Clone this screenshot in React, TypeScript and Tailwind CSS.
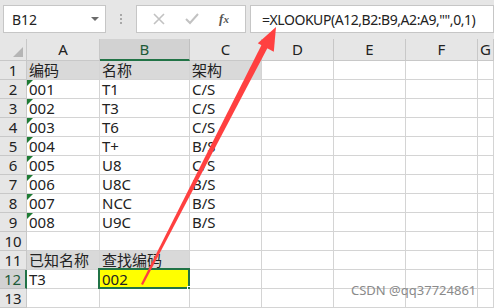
import React from 'react';

const cols = ['A', 'B', 'C', 'D', 'E', 'F', 'G'];

type Cell = { text?: string; gray?: boolean; tri?: boolean };

const rows: Cell[][] = [
  [{ text: '编码', gray: true }, { text: '名称', gray: true }, { text: '架构', gray: true }],
  [{ text: '001', tri: true }, { text: 'T1' }, { text: 'C/S' }],
  [{ text: '002', tri: true }, { text: 'T3' }, { text: 'C/S' }],
  [{ text: '003', tri: true }, { text: 'T6' }, { text: 'C/S' }],
  [{ text: '004', tri: true }, { text: 'T+' }, { text: 'B/S' }],
  [{ text: '005', tri: true }, { text: 'U8' }, { text: 'C/S' }],
  [{ text: '006', tri: true }, { text: 'U8C' }, { text: 'B/S' }],
  [{ text: '007', tri: true }, { text: 'NCC' }, { text: 'B/S' }],
  [{ text: '008', tri: true }, { text: 'U9C' }, { text: 'B/S' }],
  [],
  [{ text: '已知名称', gray: true }, { text: '查找编码', gray: true }],
  [{ text: 'T3' }, { text: '002' }],
  [],
];

const font = { fontFamily: '"Noto Sans", "Noto Sans CJK SC", sans-serif' };

export default function App() {
  return (
    <div className="relative w-[494px] h-[308px] overflow-hidden bg-[#e6e6e6] text-[#222]" style={font}>
      {/* Formula bar */}
      <div className="flex items-center h-[39px] pb-[6px] pt-[5px]">
        <div className="ml-[3px] w-[103px] h-[28px] bg-white border border-[#c6c6c6] flex items-center justify-between pl-[8px] pr-[6px]">
          <span className="text-[14px]">B12</span>
          <span className="w-0 h-0 border-l-[4px] border-r-[4px] border-t-[4px] border-l-transparent border-r-transparent border-t-[#6b6b6b]" />
        </div>
        <div className="w-[30px] flex flex-col items-center gap-[2px]">
          <span className="w-[2px] h-[2px] bg-[#a8a8a8]" />
          <span className="w-[2px] h-[2px] bg-[#a8a8a8]" />
          <span className="w-[2px] h-[2px] bg-[#a8a8a8]" />
        </div>
        <div className="w-[110px] h-[28px] bg-white border border-[#c6c6c6] flex items-center justify-around px-[6px]">
          <svg width="12" height="12" viewBox="0 0 12 12">
            <path d="M1 1L11 11M11 1L1 11" stroke="#c2c2c2" strokeWidth="1.6" />
          </svg>
          <svg width="14" height="12" viewBox="0 0 14 12">
            <path d="M1 6L5 10L13 1" stroke="#c2c2c2" strokeWidth="2" fill="none" />
          </svg>
          <span className="text-[13px] italic text-[#555] font-semibold" style={{ fontFamily: '"Liberation Serif", serif' }}>
            f<span className="text-[11px]">x</span>
          </span>
        </div>
        <div className="ml-[4px] flex-1 h-[28px] bg-white border border-[#c6c6c6] flex items-center pl-[11px]">
          <span className="text-[14px] tracking-[-0.45px] whitespace-nowrap">=XLOOKUP(A12,B2:B9,A2:A9,"",0,1)</span>
        </div>
      </div>

      {/* Sheet */}
      <div className="grid grid-cols-[27px_73px_90px_72px_72px_72px_72px_1fr] bg-white">
        {/* header row */}
        <div className="h-[22px] bg-[#e6e6e6] border-r border-b border-[#c8c8c8] relative">
          <svg className="absolute right-[3px] bottom-[3px]" width="10" height="10" viewBox="0 0 10 10">
            <polygon points="10,0 10,10 0,10" fill="#b5b5b5" />
          </svg>
        </div>
        {cols.map((c) => (
          <div
            key={c}
            className={
              c === 'B'
                ? 'h-[22px] bg-[#d2d2d2] border-r border-[#c0c0c0] border-b-2 border-b-[#217346] flex items-center justify-center text-[15px] text-[#1d5a38]'
                : 'h-[22px] bg-[#e6e6e6] border-r border-b border-[#c8c8c8] flex items-center justify-center text-[15px]'
            }
          >
            {c}
          </div>
        ))}

        {rows.map((r, i) => {
          const n = i + 1;
          const sel = n === 12;
          return (
            <React.Fragment key={n}>
              <div
                className={
                  sel
                    ? 'h-[19px] bg-[#d2d2d2] border-b border-[#c0c0c0] border-r-2 border-r-[#217346] flex items-center justify-center text-[15px] text-[#1d5a38]'
                    : 'h-[19px] bg-[#e6e6e6] border-r border-b border-[#c8c8c8] flex items-center justify-center text-[15px]'
                }
              >
                {n}
              </div>
              {cols.map((c, ci) => {
                const cell = r[ci] || {};
                const isSel = sel && c === 'B';
                return (
                  <div
                    key={c}
                    className={
                      'relative h-[19px] border-r border-b border-[#d4d4d4] pl-[2px] flex items-center text-[15px] leading-none whitespace-nowrap ' +
                      (isSel ? 'bg-[#ffff00]' : cell.gray ? 'bg-[#d9d9d9]' : 'bg-white')
                    }
                  >
                    {cell.tri && (
                      <span className="absolute left-0 top-0 w-0 h-0 border-t-[6px] border-r-[6px] border-t-[#1e7b34] border-r-transparent" />
                    )}
                    {cell.text}
                    {isSel && (
                      <>
                        <span className="absolute -left-[2px] -top-[2px] -right-[1px] -bottom-[1px] border-2 border-[#217346]" />
                        <span className="absolute -right-[4px] -bottom-[4px] w-[6px] h-[6px] bg-[#217346] border border-white" />
                      </>
                    )}
                  </div>
                );
              })}
            </React.Fragment>
          );
        })}
      </div>

      {/* watermark */}
      <div className="absolute left-[351px] top-[281px] text-[13px] text-[#8a8a8a] whitespace-nowrap">CSDN @qq37724861</div>

      {/* annotation arrow */}
      <svg className="absolute inset-0 pointer-events-none" width="494" height="308" viewBox="0 0 494 308">
        <polygon points="141,284 143,285 268,47 262,44" fill="#ff4040" />
        <polygon points="276,27 257.8,43.3 273.8,51.7" fill="#ff4040" />
      </svg>
    </div>
  );
}
